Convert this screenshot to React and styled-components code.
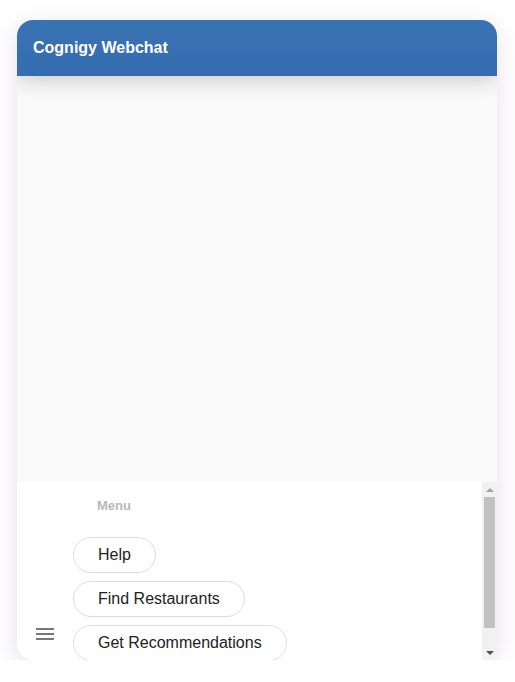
import React from "react";
import styled, { createGlobalStyle } from "styled-components";

const Global = createGlobalStyle`
  html, body { margin: 0; padding: 0; background: #ffffff; }
  body { font-family: "Liberation Sans", Arial, sans-serif; }
  * { box-sizing: border-box; }
`;

const Page = styled.div`
  padding: 20px 18px 0 17px;
`;

const Window = styled.div`
  width: 480px;
  height: 640px;
  border-radius: 16px;
  overflow: hidden;
  display: flex;
  flex-direction: column;
  background: #fafafa;
  box-shadow: 0 6px 24px rgba(120, 90, 135, 0.2);
`;

const Header = styled.header`
  position: relative;
  z-index: 2;
  height: 56px;
  flex: 0 0 56px;
  display: flex;
  align-items: center;
  padding: 0 16px;
  background: linear-gradient(180deg, #3a73b3 0%, #346db0 100%);
  box-shadow: 0 4px 22px rgba(0, 0, 0, 0.2);
`;

const Title = styled.h1`
  margin: 0;
  font-size: 16px;
  font-weight: 700;
  color: #ffffff;
`;

const History = styled.div`
  flex: 1 1 auto;
  background: #fafafa;
`;

const MenuPanel = styled.div`
  flex: 0 0 178px;
  height: 178px;
  display: flex;
  background: #ffffff;
`;

const MenuToggle = styled.button`
  flex: 0 0 56px;
  align-self: flex-end;
  display: flex;
  justify-content: center;
  padding: 0 0 20px 0;
  margin: 0;
  border: none;
  background: transparent;
  color: #777;
`;

const MenuContent = styled.div`
  flex: 1 1 auto;
  overflow: hidden;
  padding: 16px 0 23px;
`;

const ScrollTrack = styled.div`
  flex: 0 0 15px;
  display: flex;
  flex-direction: column;
  background: #f1f1f1;
`;

const ScrollArrow = styled.div`
  flex: 0 0 15px;
  display: flex;
  align-items: center;
  justify-content: center;
  color: ${(p) => (p.$disabled ? "#a3a3a3" : "#505050")};
`;

const ScrollRail = styled.div`
  flex: 1 1 auto;
  padding: 0 2px;
`;

const ScrollThumb = styled.div`
  height: ${(p) => p.$size}px;
  background: #c1c1c1;
`;

const MenuLabel = styled.div`
  font-size: 13px;
  font-weight: 700;
  color: #b8b8b8;
  line-height: 15px;
  padding-left: 24px;
  margin-bottom: 24px;
`;

const ButtonList = styled.div`
  display: flex;
  flex-direction: column;
  align-items: flex-start;
  gap: 8px;
`;

const Chip = styled.button`
  flex: 0 0 auto;
  height: 36px;
  padding: 0 24px;
  border: 1px solid #dcdcdc;
  border-radius: 18px;
  background: #ffffff;
  font-family: "Liberation Sans", Arial, sans-serif;
  font-size: 16px;
  color: #222;
  cursor: pointer;
`;

const items = ["Help", "Find Restaurants", "Get Recommendations"];

export default function App() {
  return (
    <Page>
      <Global />
      <Window>
        <Header>
          <Title>Cognigy Webchat</Title>
        </Header>
        <History />
        <MenuPanel>
          <MenuToggle aria-label="menu">
            <svg width="18" height="12" viewBox="0 0 18 12">
              <rect x="0" y="0" width="18" height="2" fill="currentColor" />
              <rect x="0" y="5" width="18" height="2" fill="currentColor" />
              <rect x="0" y="10" width="18" height="2" fill="currentColor" />
            </svg>
          </MenuToggle>
          <MenuContent>
            <MenuLabel>Menu</MenuLabel>
            <ButtonList>
              {items.map((t) => (
                <Chip key={t}>{t}</Chip>
              ))}
            </ButtonList>
          </MenuContent>
          <ScrollTrack>
            <ScrollArrow $disabled>
              <svg width="8" height="4" viewBox="0 0 8 4">
                <polygon points="4,0 8,4 0,4" fill="currentColor" />
              </svg>
            </ScrollArrow>
            <ScrollRail>
              <ScrollThumb $size={131} />
            </ScrollRail>
            <ScrollArrow>
              <svg width="8" height="4" viewBox="0 0 8 4">
                <polygon points="0,0 8,0 4,4" fill="currentColor" />
              </svg>
            </ScrollArrow>
          </ScrollTrack>
        </MenuPanel>
      </Window>
    </Page>
  );
}
